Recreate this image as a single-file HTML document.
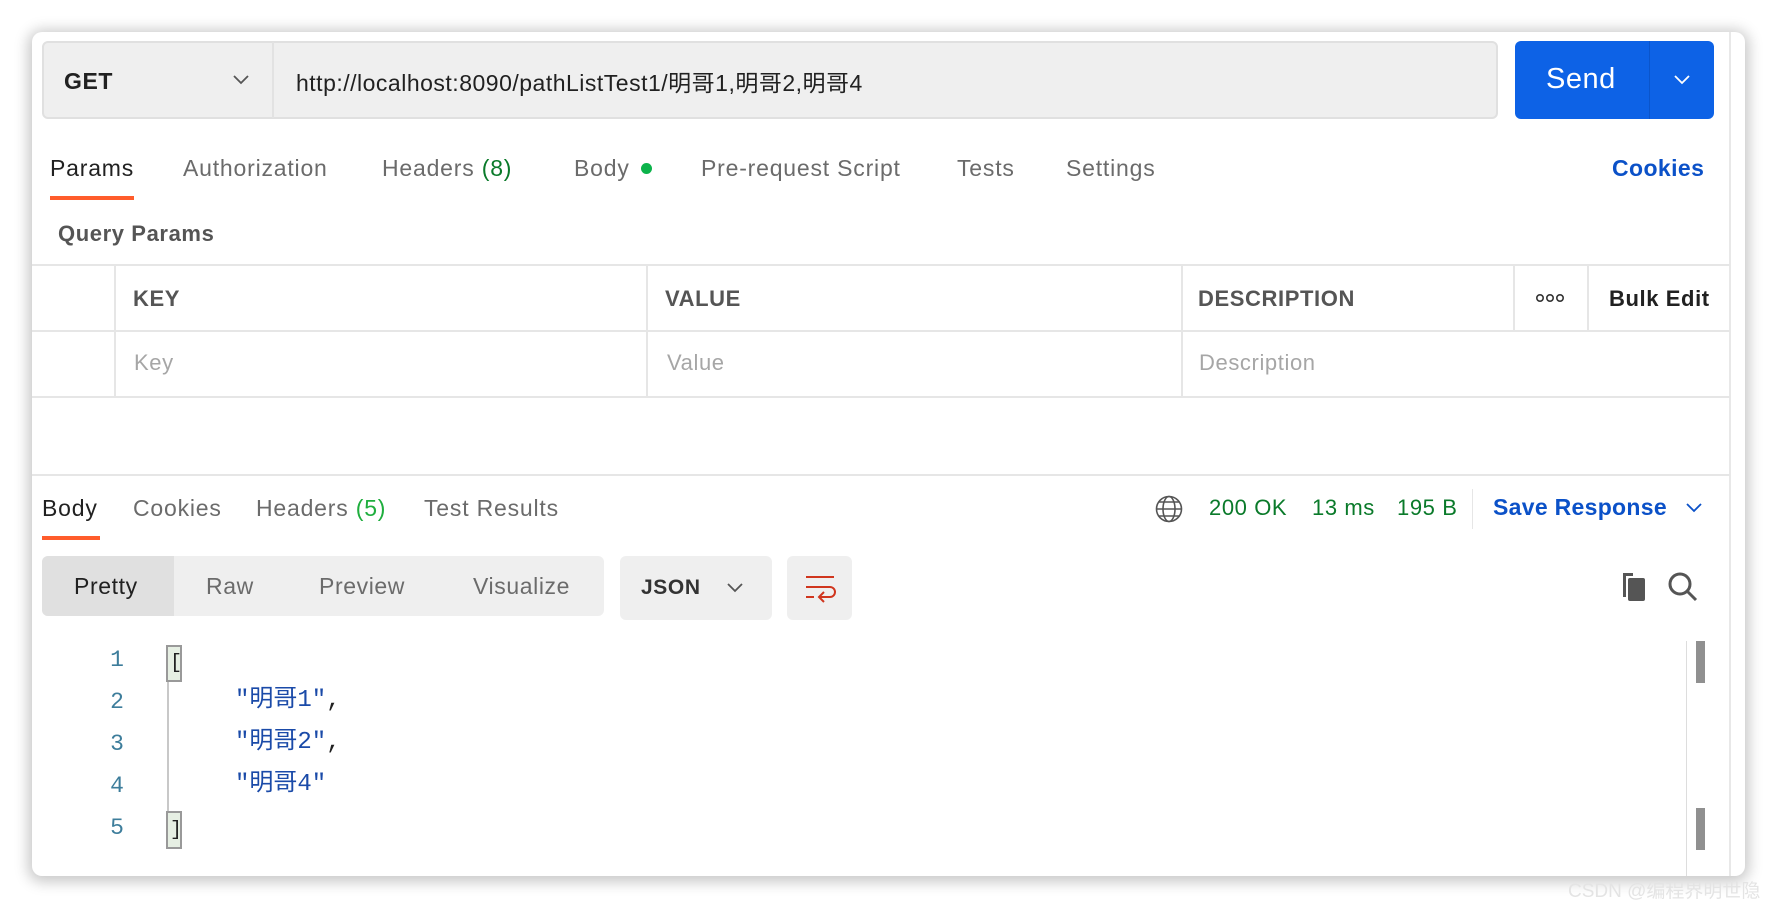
<!DOCTYPE html>
<html><head><meta charset="utf-8"><style>
*{margin:0;padding:0;box-sizing:border-box}
body{width:1776px;height:908px;background:#fff;font-family:"Liberation Sans","Noto Sans CJK SC",sans-serif;position:relative;overflow:hidden;color:#212121}
.card{position:absolute;left:32px;top:32px;width:1713px;height:844px;background:#fff;border-radius:10px;box-shadow:0 2px 14px 4px rgba(0,0,0,.22)}
.a{position:absolute;white-space:nowrap}
.hl{position:absolute;height:2px;background:#e6e6e6}
.vl{position:absolute;width:2px;background:#e6e6e6}
.tab{font-size:23px;color:#6b6b6b;letter-spacing:0.8px}
.ls{letter-spacing:0.6px}
.mono{font-family:"Liberation Mono","Noto Sans CJK SC",monospace}
</style></head><body>
<div class="card"></div>
<div class="vl" style="left:1729px;top:32px;height:844px;background:#e8e8e8"></div>
<!-- URL bar -->
<div class="a" style="left:42px;top:41px;width:1456px;height:78px;background:#efefef;border:2px solid #e0e0e0;border-radius:6px"></div>
<div class="vl" style="left:272px;top:42px;height:76px;background:#e2e2e2"></div>
<div class="a" style="left:64px;top:68px;font-size:23px;font-weight:bold;color:#212121;letter-spacing:0.6px">GET</div>
<svg class="a" style="left:232px;top:74px" width="18" height="12"><path d="M2 2 L9 9 L16 2" fill="none" stroke="#555" stroke-width="1.8"/></svg>
<div class="a" style="left:296px;top:64px;font-size:23px;color:#212121;letter-spacing:0.5px">http://localhost:8090/pathListTest1/明哥1,明哥2,明哥4</div>
<!-- Send -->
<div class="a" style="left:1515px;top:41px;width:199px;height:78px;background:#0d62e6;border-radius:6px"></div>
<div class="vl" style="left:1649px;top:41px;height:78px;background:#0a55cc;width:1px"></div>
<div class="a" style="left:1546px;top:63px;font-size:29px;color:#fff;letter-spacing:0.5px">Send</div>
<svg class="a" style="left:1673px;top:74px" width="18" height="12"><path d="M2 2 L9 9 L16 2" fill="none" stroke="#fff" stroke-width="1.8"/></svg>
<!-- tabs -->
<div class="a tab" style="left:50px;top:155px;color:#212121">Params</div>
<div class="a" style="left:50px;top:196px;width:84px;height:4px;background:#ff5c2b"></div>
<div class="a tab" style="left:183px;top:155px">Authorization</div>
<div class="a tab" style="left:382px;top:155px">Headers <span style="color:#0a7a2a">(8)</span></div>
<div class="a tab" style="left:574px;top:155px">Body</div>
<div class="a" style="left:641px;top:163px;width:11px;height:11px;border-radius:50%;background:#0cb34b"></div>
<div class="a tab" style="left:701px;top:155px">Pre-request Script</div>
<div class="a tab" style="left:957px;top:155px">Tests</div>
<div class="a tab" style="left:1066px;top:155px">Settings</div>
<div class="a" style="left:1612px;top:155px;font-size:23px;font-weight:bold;color:#0b51c8;letter-spacing:0.4px">Cookies</div>
<div class="a ls" style="left:58px;top:221px;font-size:22px;font-weight:bold;color:#555">Query Params</div>
<!-- table -->
<div class="hl" style="left:32px;top:264px;width:1698px"></div>
<div class="hl" style="left:32px;top:330px;width:1698px"></div>
<div class="hl" style="left:32px;top:396px;width:1698px"></div>
<div class="vl" style="left:114px;top:264px;height:134px"></div>
<div class="vl" style="left:646px;top:264px;height:134px"></div>
<div class="vl" style="left:1181px;top:264px;height:134px"></div>
<div class="vl" style="left:1513px;top:264px;height:67px"></div>
<div class="vl" style="left:1587px;top:264px;height:67px"></div>
<div class="a ls" style="left:133px;top:286px;font-size:22px;font-weight:bold;color:#555">KEY</div>
<div class="a ls" style="left:665px;top:286px;font-size:22px;font-weight:bold;color:#555">VALUE</div>
<div class="a ls" style="left:1198px;top:286px;font-size:22px;font-weight:bold;color:#555">DESCRIPTION</div>
<svg class="a" style="left:1535px;top:293px" width="30" height="10"><g fill="none" stroke="#333" stroke-width="1.6"><circle cx="5" cy="5" r="3.2"/><circle cx="15" cy="5" r="3.2"/><circle cx="25" cy="5" r="3.2"/></g></svg>
<div class="a ls" style="left:1609px;top:286px;font-size:22px;font-weight:bold;color:#212121">Bulk Edit</div>
<div class="a ls" style="left:134px;top:350px;font-size:22px;color:#a6a6a6">Key</div>
<div class="a ls" style="left:667px;top:350px;font-size:22px;color:#a6a6a6">Value</div>
<div class="a ls" style="left:1199px;top:350px;font-size:22px;color:#a6a6a6">Description</div>
<div class="hl" style="left:32px;top:474px;width:1698px"></div>
<!-- response tabs -->
<div class="a tab" style="left:42px;top:495px;color:#212121">Body</div>
<div class="a" style="left:42px;top:536px;width:58px;height:4px;background:#ff5c2b"></div>
<div class="a tab" style="left:133px;top:495px">Cookies</div>
<div class="a tab" style="left:256px;top:495px">Headers <span style="color:#1fae3e">(5)</span></div>
<div class="a tab" style="left:424px;top:495px">Test Results</div>
<svg class="a" style="left:1154px;top:494px" width="30" height="30"><g fill="none" stroke="#555" stroke-width="1.6"><circle cx="15" cy="15" r="12.5"/><ellipse cx="15" cy="15" rx="6" ry="12.5"/><path d="M2.5 15 H27.5 M5 8 H25 M5 22 H25"/></g></svg>
<div class="a ls" style="left:1209px;top:495px;font-size:22px;color:#0a7a2a">200 OK</div>
<div class="a ls" style="left:1312px;top:495px;font-size:22px;color:#0a7a2a">13 ms</div>
<div class="a ls" style="left:1397px;top:495px;font-size:22px;color:#0a7a2a">195 B</div>
<div class="vl" style="left:1472px;top:489px;height:40px;width:1px"></div>
<div class="a" style="left:1493px;top:494px;font-size:23px;font-weight:bold;color:#0b51c8;letter-spacing:0.3px">Save Response</div>
<svg class="a" style="left:1685px;top:502px" width="18" height="12"><path d="M2 2 L9 9 L16 2" fill="none" stroke="#0b51c8" stroke-width="1.8"/></svg>
<!-- segmented -->
<div class="a" style="left:42px;top:556px;width:562px;height:60px;background:#efefef;border-radius:6px"></div>
<div class="a" style="left:42px;top:556px;width:132px;height:60px;background:#e0e0e0;border-radius:6px 0 0 6px"></div>
<div class="a ls" style="left:74px;top:573px;font-size:23px;color:#212121">Pretty</div>
<div class="a ls" style="left:206px;top:573px;font-size:23px;color:#6b6b6b">Raw</div>
<div class="a ls" style="left:319px;top:573px;font-size:23px;color:#6b6b6b">Preview</div>
<div class="a ls" style="left:473px;top:573px;font-size:23px;color:#6b6b6b">Visualize</div>
<div class="a" style="left:620px;top:556px;width:152px;height:64px;background:#efefef;border-radius:6px"></div>
<div class="a ls" style="left:641px;top:576px;font-size:21px;font-weight:bold;color:#333">JSON</div>
<svg class="a" style="left:726px;top:582px" width="18" height="12"><path d="M2 2 L9 9 L16 2" fill="none" stroke="#555" stroke-width="1.8"/></svg>
<div class="a" style="left:787px;top:556px;width:65px;height:64px;background:#efefef;border-radius:6px"></div>
<svg class="a" style="left:804px;top:574px" width="32" height="30"><g fill="none" stroke="#d0361e" stroke-width="2"><path d="M2 3 H30 M2 13 H26 a5 5 0 0 1 0 10 H16 M20 18 L15 23 L20 28 M2 23 H10"/></g></svg>
<svg class="a" style="left:1619px;top:571px" width="30" height="32"><path d="M4 2 H14 V5 H7 V26 H4 Z" fill="#555"/><rect x="9" y="7" width="17" height="23" rx="2" fill="#555"/></svg>
<svg class="a" style="left:1667px;top:571px" width="32" height="32"><g fill="none" stroke="#555" stroke-width="3"><circle cx="13" cy="13" r="10"/><path d="M20 20 L29 29"/></g></svg>
<!-- code -->
<div class="mono a" style="left:110px;top:639px;font-size:23px;line-height:42px;color:#3d7d9b;text-align:center;width:14px">1<br>2<br>3<br>4<br>5</div>
<div class="a" style="left:167px;top:650px;width:2px;height:190px;background:#c8c8c8"></div>
<div class="a" style="left:166px;top:645px;width:16px;height:37px;background:#e6efe3;border:2px solid #999"></div>
<div class="a" style="left:166px;top:811px;width:16px;height:38px;background:#e6efe3;border:2px solid #999"></div>
<div class="mono a" style="left:170px;top:643px;font-size:20px;line-height:42px;color:#212121">[</div>
<div class="mono a" style="left:170px;top:810px;font-size:20px;line-height:42px;color:#212121">]</div>
<div class="mono a" style="left:235px;top:680px;font-size:24px;line-height:42px;color:#1a4aa8">"明哥1"<span style="color:#212121">,</span><br>"明哥2"<span style="color:#212121">,</span><br>"明哥4"</div>
<div class="vl" style="left:1686px;top:641px;height:235px;width:1px;background:#ddd"></div>
<div class="a" style="left:1696px;top:641px;width:9px;height:42px;background:#909090"></div>
<div class="a" style="left:1696px;top:808px;width:9px;height:42px;background:#909090"></div>
<div class="a" style="left:1568px;top:876px;font-size:19px;color:#e4e4e4">CSDN @编程界明世隐</div>
</body></html>
